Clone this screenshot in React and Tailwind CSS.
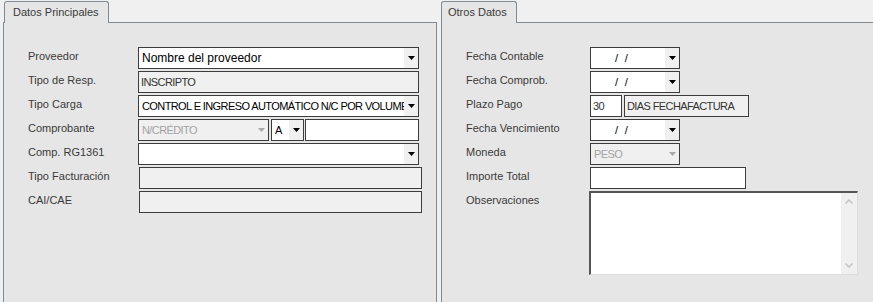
import React from "react";

const Arrow = ({ disabled }) => (
  <svg width="7" height="4" viewBox="0 0 7 4" className="block">
    <path d="M0 0h7L3.5 4z" fill={disabled ? "#a8a8a8" : "#000"} />
  </svg>
);

const Select = ({ value, w, disabled, caps, extra = "", textExtra = "pl-[3px]" }) => (
  <div
    className={`h-[22px] flex border border-[#3c3c3c] ${disabled ? "bg-[#f0f0f0]" : "bg-white"} ${extra}`}
    style={{ width: w }}
  >
    <div
      className={`flex-1 min-w-0 overflow-hidden whitespace-pre flex items-center ${textExtra} ${
        disabled ? "text-[#a3a3a3]" : "text-black"
      } ${caps ? "text-[11px] tracking-[-0.6px]" : "text-[12px]"}`}
    >
      {value}
    </div>
    <div className={`w-[14px] flex items-center justify-center ${disabled ? "" : "bg-[#f0f0f0]"}`}>
      <Arrow disabled={disabled} />
    </div>
  </div>
);

const Box = ({ value = "", w, gray, extra = "" }) => (
  <div
    className={`h-[22px] flex items-center border border-[#3c3c3c] pl-[2px] text-[11px] tracking-[-0.6px] text-[#333] whitespace-pre overflow-hidden ${
      gray ? "bg-[#f0f0f0]" : "bg-white"
    } ${extra}`}
    style={{ width: w }}
  >
    {value}
  </div>
);

const Row = ({ label, labelW, children }) => (
  <div className="flex h-[22px] mb-[2px]">
    <div className="text-[11px] leading-[18px] text-[#3a3a3a] shrink-0" style={{ width: labelW }}>
      {label}
    </div>
    <div className="flex">{children}</div>
  </div>
);

const DateSel = () => (
  <Select value={"/   /"} w={90} caps textExtra="pl-[24px]" />
);

export default function App() {
  return (
    <div className="w-[873px] h-[302px] bg-[#f0f0f0] flex overflow-hidden font-['Liberation_Sans',Arial,sans-serif]">
      {/* Left panel */}
      <div className="ml-[3px] w-[434px] flex flex-col shrink-0">
        <div className="h-[22px] flex items-start pt-[1px]">
          <div className="relative z-10 ml-[1px] h-[22px] w-[105px] bg-[#e6e6e6] border-t border-l border-r border-[#7f8a94] rounded-t-[3px] pl-[8px] pt-[3px] text-[11px] leading-[15px] text-[#3a3a3a]">
            Datos Principales
          </div>
        </div>
        <div className="flex-1 bg-[#e6e6e6] border-t border-l border-r border-[#7f8a94] pt-[24px] pl-[24px]">
          <Row label="Proveedor" labelW={110}>
            <Select value="Nombre del proveedor" w={281} />
          </Row>
          <Row label="Tipo de Resp." labelW={110}>
            <Box value="INSCRIPTO" w={281} gray />
          </Row>
          <Row label="Tipo Carga" labelW={110}>
            <Select value="CONTROL E INGRESO AUTOMÁTICO N/C POR VOLUME" w={281} caps />
          </Row>
          <Row label="Comprobante" labelW={110}>
            <Select value="N/CRÉDITO" w={131} caps disabled />
            <Select value="A" w={33} caps extra="ml-[2px]" />
            <Box w={114} extra="ml-[1px]" />
          </Row>
          <Row label="Comp. RG1361" labelW={110}>
            <Select value="" w={281} />
          </Row>
          <Row label="Tipo Facturación" labelW={110}>
            <Box w={283} gray extra="ml-[1px]" />
          </Row>
          <Row label="CAI/CAE" labelW={110}>
            <Box w={283} gray extra="ml-[1px]" />
          </Row>
        </div>
      </div>

      {/* Right panel */}
      <div className="ml-[4px] w-[440px] flex flex-col shrink-0">
        <div className="h-[22px] flex items-start pt-[1px]">
          <div className="relative z-10 h-[22px] w-[76px] bg-[#e6e6e6] border-t border-l border-r border-[#7f8a94] rounded-t-[3px] pl-[6px] pt-[3px] text-[11px] leading-[15px] text-[#3a3a3a]">
            Otros Datos
          </div>
        </div>
        <div className="flex-1 bg-[#e6e6e6] border-t border-l border-[#7f8a94] pt-[24px] pl-[24px]">
          <Row label="Fecha Contable" labelW={124}>
            <DateSel />
          </Row>
          <Row label="Fecha Comprob." labelW={124}>
            <DateSel />
          </Row>
          <Row label="Plazo Pago" labelW={124}>
            <Box value="30" w={32} />
            <Box value="DIAS FECHAFACTURA" w={125} gray extra="ml-[2px]" />
          </Row>
          <Row label="Fecha Vencimiento" labelW={124}>
            <DateSel />
          </Row>
          <Row label="Moneda" labelW={124}>
            <Select value="PESO" w={90} caps disabled />
          </Row>
          <Row label="Importe Total" labelW={124}>
            <Box w={156} />
          </Row>
          <div className="flex">
            <div className="w-[123px] text-[11px] leading-[18px] text-[#3a3a3a] shrink-0">Observaciones</div>
            <div className="w-[269px] h-[84px] flex bg-white border-t-2 border-l-2 border-t-[#555] border-l-[#555] border-r border-b border-r-[#dcdcdc] border-b-[#dcdcdc]">
              <div className="flex-1" />
              <div className="w-[16px] bg-[#f0f0f0] flex flex-col items-center justify-between py-[6px]">
                <svg width="8" height="5" viewBox="0 0 8 5"><path d="M0.5 4.5L4 1l3.5 3.5" stroke="#c4c4c4" strokeWidth="1.5" fill="none" /></svg>
                <svg width="8" height="5" viewBox="0 0 8 5"><path d="M0.5 0.5L4 4l3.5-3.5" stroke="#c4c4c4" strokeWidth="1.5" fill="none" /></svg>
              </div>
            </div>
          </div>
        </div>
      </div>
    </div>
  );
}
